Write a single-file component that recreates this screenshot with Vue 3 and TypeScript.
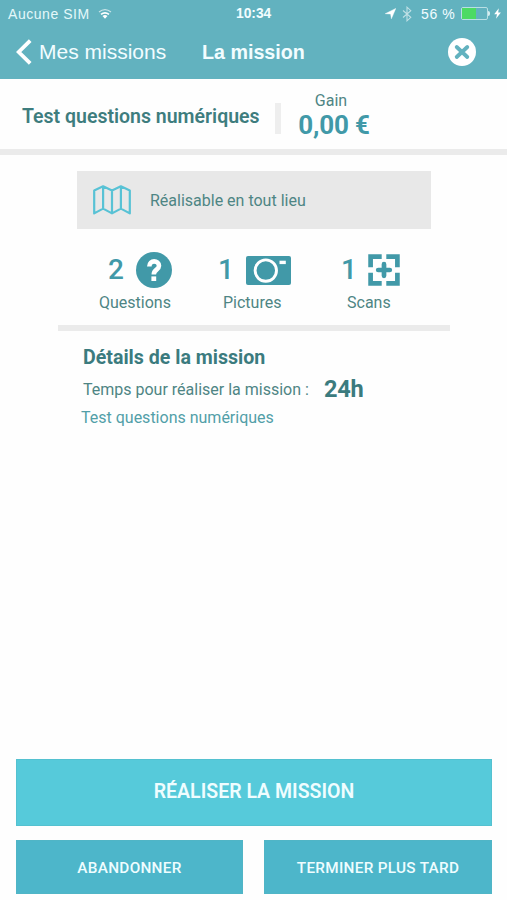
<script setup lang="ts">
interface Stat {
  kind: 'questions' | 'pictures' | 'scans'
  count: number
  label: string
}

const stats: Stat[] = [
  { kind: 'questions', count: 2, label: 'Questions' },
  { kind: 'pictures', count: 1, label: 'Pictures' },
  { kind: 'scans', count: 1, label: 'Scans' },
]
const batteryLevel = 56
</script>

<template>
  <div class="screen">
    <header class="header">
      <div class="status">
        <span class="carrier">Aucune SIM</span>
        <svg class="wifi" width="14" height="12" viewBox="0 0 14 12">
          <g fill="none" stroke="#fff">
            <path d="M1 4Q7-.8 13 4" stroke-width="1.2" opacity=".65" />
            <path d="M3 6.4Q7 3.2 11 6.4" stroke-width="1.7" />
          </g>
          <path d="M4.5 8Q7 6.2 9.5 8L7 10.8Z" fill="#fff" />
        </svg>
        <span class="clock">10:34</span>
        <div class="indicators">
          <svg width="11" height="11" viewBox="0 0 11 11"><path d="M.2 5.7 10.8.4 6.4 10.8 5.6 6Z" fill="#fff" stroke="#fff" stroke-width=".4" /></svg>
          <svg class="bluetooth" width="10" height="16" viewBox="0 0 10 16">
            <path d="M1 4.5 8.8 11.3 5 14.8V1.2L8.8 4.7 1 11.5" fill="none" stroke="#fff" stroke-width="1.1" opacity=".6" />
          </svg>
          <span class="percent">{{ batteryLevel }} %</span>
          <span class="battery"><span class="charge" :style="{ width: batteryLevel + '%' }"></span></span>
          <span class="battery-tip"></span>
          <svg class="bolt" width="7" height="11" viewBox="0 0 7 11"><path d="M4.8.2.2 6.3H3L2 10.8 6.9 4.5H4.2Z" fill="#fff" /></svg>
        </div>
      </div>
      <nav class="nav">
        <svg class="back" width="16" height="26" viewBox="0 0 16 26"><path d="M14.2 1.6 2.7 13 14.2 24.4" fill="none" stroke="#fff" stroke-width="3.8" /></svg>
        <span class="back-label">Mes missions</span>
        <h1 class="title">La mission</h1>
        <svg class="close" width="28" height="28" viewBox="0 0 28 28">
          <circle cx="14" cy="14" r="14" fill="#fff" />
          <path d="M8.7 9 19.3 19M19.3 9 8.7 19" stroke="#62b2bf" stroke-width="3.8" stroke-linecap="round" />
        </svg>
      </nav>
    </header>

    <section class="summary">
      <h2 class="name">Test questions numériques</h2>
      <span class="separator"></span>
      <div class="gain">
        <span class="gain-label">Gain</span>
        <strong class="gain-value">0,00 €</strong>
      </div>
    </section>

    <main class="content">
      <div class="place">
        <svg width="38" height="30" viewBox="0 0 38 30">
          <path d="M1.2 5.5 10.1 1.3 19 5.5 27.9 1.3 36.8 5.5V28.4L27.9 23.6 19 28.4 10.1 23.6 1.2 28.4ZM10.1 1.3V23.6M19 5.5V28.4M27.9 1.3V23.6" fill="none" stroke="#58c2d5" stroke-width="2.2" stroke-linejoin="round" />
        </svg>
        <span class="place-text">Réalisable en tout lieu</span>
      </div>

      <div class="stats">
        <div v-for="s in stats" :key="s.kind" class="stat" :class="s.kind">
          <div class="stat-top">
            <span class="count">{{ s.count }}</span>
            <svg v-if="s.kind === 'questions'" width="36" height="36" viewBox="0 0 36 36">
              <circle cx="18" cy="18" r="18" fill="#4199a8" />
              <path d="M13.3 14.6C13.3 7.4 23 8.2 23 13.8C23 17.8 17.8 17.6 17.8 22.4" fill="none" stroke="#fff" stroke-width="4.6" />
              <rect x="15.4" y="24.4" width="4.8" height="4.6" fill="#fff" />
            </svg>
            <svg v-else-if="s.kind === 'pictures'" width="45" height="29" viewBox="0 0 45 29">
              <rect width="45" height="29" rx="2" fill="#4199a8" />
              <circle cx="19.8" cy="14.6" r="10.7" fill="none" stroke="#fff" stroke-width="2.9" />
              <rect x="33.5" y="4.7" width="6.3" height="3.4" fill="#fff" />
            </svg>
            <svg v-else width="32" height="32" viewBox="0 0 32 32">
              <g fill="none" stroke="#4199a8" stroke-width="4.7">
                <path d="M2.6 13.2V2.6H13.7M18.3 2.6H29.4V13.2M29.4 18.8V29.4H18.3M13.7 29.4H2.6V18.8" />
                <path d="M16 10.2V21.8M10.2 16H21.8" stroke-linecap="round" />
              </g>
            </svg>
          </div>
          <span class="stat-label">{{ s.label }}</span>
        </div>
      </div>

      <div class="details">
        <h3 class="details-title">Détails de la mission</h3>
        <p class="time"><span class="time-label">Temps pour réaliser la mission :</span><strong class="hours">24h</strong></p>
        <p class="description">Test questions numériques</p>
      </div>
    </main>

    <footer class="actions">
      <button class="primary">RÉALISER LA MISSION</button>
      <button class="secondary abandon">ABANDONNER</button>
      <button class="secondary later">TERMINER PLUS TARD</button>
    </footer>
  </div>
</template>

<style>
body { margin: 0; background: #fff; }
</style>

<style scoped>
.screen { box-sizing: border-box; width: 507px; height: 900px; display: flex; flex-direction: column; overflow: hidden; background: #fefefe; font-family: Roboto, "Liberation Sans", sans-serif; color: #4e8584; }
h1, h2, h3, p { margin: 0; }
span, strong, h1, h2, h3, p { white-space: nowrap; }
svg { display: block; flex: none; }

.header { height: 79px; flex: none; background: #62b2bf; color: #f2fdff; font-family: "Liberation Sans", Arial, sans-serif; }
.status { height: 27px; display: grid; grid-template-columns: 91px 145px 60px 1fr; align-items: center; font-size: 14px; }
.carrier { padding-left: 8px; letter-spacing: .55px; color: #e4f8fa; }
.wifi { margin-left: 7px; }
.clock { font-weight: 700; font-size: 13.8px; }
.indicators { display: flex; align-items: center; padding-left: 89px; }
.bluetooth { margin-left: 6px; }
.percent { width: 36px; margin-left: 9px; letter-spacing: .6px; }
.battery { box-sizing: border-box; width: 27px; height: 13px; margin-left: 4px; padding: 0; border: 1px solid #b9dfe4; border-radius: 2px; }
.charge { display: block; height: 100%; background: #4cda64; }
.battery-tip { width: 2px; height: 5px; background: #d6eff2; border-radius: 0 2px 2px 0; }
.bolt { margin-left: 4px; }
.nav { height: 50px; display: flex; align-items: center; padding: 0 31px 0 16px; }
.back-label { width: 156px; margin-left: 7px; font-size: 21px; }
.title { margin-left: 7px; font-size: 19.7px; font-weight: 700; }
.close { margin-left: auto; }

.summary { box-sizing: border-box; height: 76px; flex: none; display: flex; align-items: flex-start; padding-left: 22px; border-bottom: 6px solid #ebebeb; }
.name { width: 253px; margin-top: 26px; font-size: 19.5px; line-height: 24px; font-weight: 600; color: #3e7d7e; }
.separator { width: 6px; height: 31px; margin-top: 24px; background: #eee; }
.gain { width: 100px; margin-top: 13px; display: flex; flex-direction: column; align-items: center; }
.gain-label { font-size: 16px; line-height: 18px; }
.gain-value { margin-left: 6px; font-size: 26px; line-height: 30px; font-weight: 700; letter-spacing: -.2px; color: #4199a8; }

.content { flex: 1; padding: 16px 57px 0 58px; }
.place { box-sizing: border-box; width: 354px; height: 58px; margin-left: 19px; padding-left: 16px; display: flex; align-items: center; gap: 19px; background: #e8e8e8; }
.place-text { font-size: 16px; }
.stats { box-sizing: border-box; height: 102px; display: grid; grid-template-columns: 154px 120px 118px; padding-top: 22px; margin-bottom: 15px; border-bottom: 6px solid #ebebeb; }
.stat { display: flex; flex-direction: column; }
.stat-top { height: 38px; display: flex; align-items: center; gap: 11px; color: #4199a8; }
.count { width: 17px; font-size: 28px; font-weight: 500; line-height: 38px; }
.questions .stat-top { padding-left: 50px; }
.pictures .stat-top { padding-left: 6px; }
.scans .stat-top { padding-left: 9px; gap: 10px; }
.stat-label { font-size: 16px; line-height: 20px; margin-top: 4px; }
.questions .stat-label { padding-left: 41px; }
.pictures .stat-label { padding-left: 11px; }
.scans .stat-label { padding-left: 15px; }
.details { padding-left: 25px; }
.details-title { font-size: 19.6px; line-height: 24px; font-weight: 700; color: #3b7b7e; }
.time { height: 34px; margin-top: 2px; display: flex; align-items: center; }
.time-label { width: 241px; font-size: 16px; }
.hours { font-size: 23.6px; font-weight: 700; letter-spacing: -.3px; color: #3b7b7e; }
.description { margin: 1px 0 0 -2px; font-size: 16px; line-height: 22px; color: #529fa8; }

.actions { display: grid; grid-template-columns: 227px 228px; justify-content: space-between; gap: 14px 0; padding: 0 15px 6px 16px; }
button { margin: 0; padding: 0; border: 1px solid #50b5c6; border-radius: 0; color: #effdff; font-family: Roboto, sans-serif; }
.primary { grid-column: 1 / -1; height: 67px; background: #56cada; border-color: #54c1d0; font-size: 19.5px; font-weight: 600; padding-bottom: 2px; }
.secondary { height: 54px; background: #4db6ca; font-size: 15.3px; letter-spacing: .3px; font-weight: 500; padding-top: 1px; }
</style>
